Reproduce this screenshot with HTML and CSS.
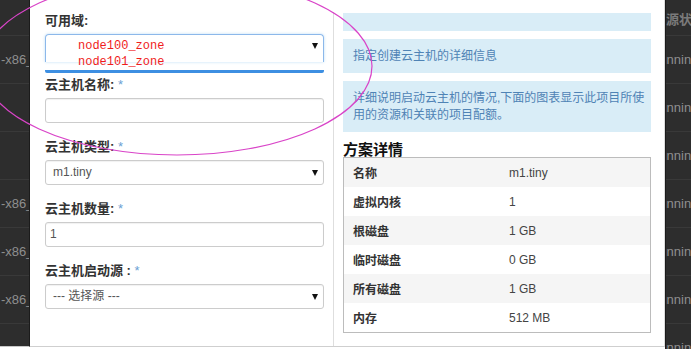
FILE: index.html
```html
<!DOCTYPE html>
<html lang="zh-CN">
<head>
    <meta charset="UTF-8">
    <title>启动云主机</title>
    <link rel="stylesheet" href="styles.css">
</head>
<body>
    <div class="page">
        <div class="backdrop left">
            <div class="bg-row"></div>
            <div class="bg-row">-x86_64</div>
            <div class="bg-row"></div>
            <div class="bg-row"></div>
            <div class="bg-row">-x86_64</div>
            <div class="bg-row">-x86_64</div>
            <div class="bg-row">-x86_64</div>
            <div class="bg-row"></div>
        </div>

        <div class="modal">
            <div class="form-col">
                <label class="field-label">可用域:</label>
                <div class="zone-select">
                    <div class="zone-box">
                        <div class="zone-option">node100_zone</div>
                        <div class="zone-option">node101_zone</div>
                        <span class="caret zone-caret"></span>
                    </div>
                    <div class="zone-bar"></div>
                </div>

                <label class="field-label">云主机名称: <span class="req">*</span></label>
                <div class="input"></div>

                <label class="field-label">云主机类型: <span class="req">*</span></label>
                <div class="input select">
                    <span>m1.tiny</span>
                    <span class="caret"></span>
                </div>

                <label class="field-label">云主机数量: <span class="req">*</span></label>
                <div class="input number">1</div>

                <label class="field-label">云主机启动源 : <span class="req">*</span></label>
                <div class="input select">
                    <span>--- 选择源 ---</span>
                    <span class="caret"></span>
                </div>
            </div>

            <div class="info-col">
                <div class="info-box empty"></div>
                <div class="info-box">指定创建云主机的详细信息</div>
                <div class="info-box">详细说明启动云主机的情况,下面的图表显示此项目所使用的资源和关联的项目配额。</div>

                <h3>方案详情</h3>
                <table class="flavor">
                    <tr><th>名称</th><td>m1.tiny</td></tr>
                    <tr><th>虚拟内核</th><td>1</td></tr>
                    <tr><th>根磁盘</th><td>1 GB</td></tr>
                    <tr><th>临时磁盘</th><td>0 GB</td></tr>
                    <tr><th>所有磁盘</th><td>1 GB</td></tr>
                    <tr><th>内存</th><td>512 MB</td></tr>
                </table>
            </div>
        </div>

        <div class="backdrop right">
            <div class="bg-row head"><span>资源状态</span></div>
            <div class="bg-row"><span>Running</span></div>
            <div class="bg-row"><span>Running</span></div>
            <div class="bg-row"><span>Running</span></div>
            <div class="bg-row"><span>Running</span></div>
            <div class="bg-row"><span>Running</span></div>
            <div class="bg-row"><span>Running</span></div>
            <div class="bg-row"><span>Running</span></div>
        </div>

        <!-- hand-drawn highlight around the zone dropdown -->
        <svg class="mark" width="691" height="349" viewBox="0 0 691 349">
            <ellipse cx="177" cy="66" rx="195" ry="89" fill="none" stroke="#d944c8" stroke-width="1.2"/>
        </svg>
    </div>
</body>
</html>
```

FILE: styles.css
```css
html, body {
    margin: 0;
    padding: 0;
    background: #fff;
    overflow: hidden;
}

body {
    font-family: "Liberation Sans", "Noto Sans CJK SC", sans-serif;
    font-size: 13px;
    color: #333;
}

.page {
    position: relative;
    display: flex;
    align-items: flex-start;
    width: 691px;
    height: 349px;
}

/* dimmed page behind the dialog */
.backdrop {
    background: #2d2d2d;
    overflow: hidden;
    white-space: nowrap;
    color: #8f8f8f;
}

.backdrop.left {
    width: 29px;
    height: 346px;
    border-right: 1px solid #1b1b1b;
    border-bottom: 1px solid #c8c8c8;
}

.backdrop.right {
    width: 25px;
    height: 349px;
    border-left: 1px solid #1b1b1b;
}

.bg-row {
    height: 48px;
    line-height: 48px;
    border-bottom: 1px solid #393939;
    box-sizing: border-box;
    padding-left: 1px;
}

.bg-row.head {
    height: 36px;
    line-height: 40px;
    font-weight: bold;
    color: #7a7a7a;
}

.bg-row:first-child {
    height: 36px;
}

.right .bg-row span {
    display: inline-block;
    margin-left: -17px;
}

.right .bg-row.head span {
    margin-left: -14px;
}

/* dialog */
.modal {
    display: flex;
    width: 634px;
    height: 346px;
    border-right: 1px solid #dcdcdc;
    border-bottom: 1px solid #cfcfcf;
    background: #fff;
}

.form-col {
    width: 279px;
    padding: 12px 9px 0 15px;
}

.field-label {
    display: block;
    height: 18px;
    line-height: 18px;
    font-weight: bold;
    margin-bottom: 4px;
}

.req {
    color: #6a9fd4;
    font-weight: normal;
}

.input {
    height: 23px;
    border: 1px solid #ccc;
    border-radius: 3px;
    box-shadow: inset 0 1px 1px rgba(0, 0, 0, 0.06);
    margin-bottom: 15px;
    line-height: 23px;
    color: #555;
    font-size: 12px;
}

.input.number {
    padding-left: 4px;
}

.input.select {
    display: flex;
    justify-content: space-between;
    align-items: center;
    padding: 0 5px 0 7px;
}

.caret {
    width: 0;
    height: 0;
    border-left: 3px solid transparent;
    border-right: 3px solid transparent;
    border-top: 6px solid #111;
}

/* open zone dropdown */
.zone-select {
    margin-top: 1px;
    margin-bottom: 3px;
}

.zone-box {
    position: relative;
    height: 24px;
    border: 1px solid #8cb8ea;
    border-bottom: none;
    border-radius: 4px 4px 0 0;
    box-shadow: 0 0 3px rgba(102, 175, 233, 0.45);
    padding: 3px 0 0 32px;
}

.zone-option {
    font-family: "Liberation Mono", monospace;
    font-size: 12px;
    line-height: 16px;
    color: #f01c1c;
}

.zone-caret {
    position: absolute;
    top: 8px;
    right: 5px;
}

.zone-bar {
    height: 3px;
    margin-top: 8px;
    background: #3d8fe2;
    border-radius: 0 0 2px 2px;
}

/* right column */
.info-col {
    width: 308px;
    margin-top: 12px;
    padding: 1px 13px 0 9px;
    border-left: 1px solid #dedede;
    height: 333px;
}

.info-box {
    background: #d9edf7;
    color: #4f83b5;
    font-size: 12px;
    line-height: 17px;
    padding: 9px 5px 8px 10px;
    margin-bottom: 8px;
}

.info-box.empty {
    height: 18px;
    padding: 0;
}

h3 {
    margin: 0;
    font-size: 15px;
    font-weight: bold;
    color: #111;
    line-height: 17px;
    margin-top: 8px;
    font-family: "Noto Sans CJK SC", sans-serif;
}

.flavor {
    width: 100%;
    border-collapse: collapse;
    border: 1px solid #bcbcbc;
    font-size: 12px;
}

.flavor th,
.flavor td {
    height: 29px;
    padding: 0 9px;
    text-align: left;
}

.flavor th {
    width: 138px;
    font-weight: bold;
}

.flavor td {
    color: #444;
}

.flavor tr:nth-child(odd) {
    background: #f5f5f5;
}

.mark {
    position: absolute;
    top: 0;
    left: 0;
    pointer-events: none;
}
```
